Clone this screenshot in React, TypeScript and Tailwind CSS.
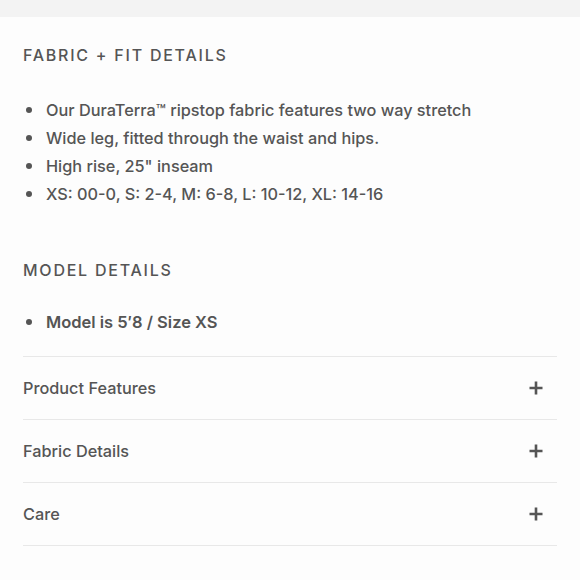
import React from 'react';

const fitDetails = [
  'Our DuraTerra™ ripstop fabric features two way stretch',
  'Wide leg, fitted through the waist and hips.',
  'High rise, 25" inseam',
  'XS: 00-0, S: 2-4, M: 6-8, L: 10-12, XL: 14-16',
];

const sections = ['Product Features', 'Fabric Details', 'Care'];

function Plus() {
  return (
    <svg width="16" height="16" viewBox="0 0 16 16" className="text-[#555]">
      <path d="M8 1.5v13M1.5 8h13" stroke="currentColor" strokeWidth="2.6" />
    </svg>
  );
}

function Bullet({ children, bold }: { children: React.ReactNode; bold?: boolean }) {
  return (
    <li className="flex items-center h-[28px]">
      <span className="w-[6px] h-[6px] rounded-full bg-[#555] ml-[3px] mr-[14px]" />
      <span className={bold ? 'font-semibold' : 'font-medium'}>{children}</span>
    </li>
  );
}

export default function App() {
  return (
    <div
      className="w-[580px] h-[580px] bg-[#fdfdfd] text-[#555] overflow-hidden"
      style={{ fontFamily: 'Inter, "Liberation Sans", sans-serif' }}
    >
      <div className="h-[17px] bg-[#f3f3f3]" />
      <div className="px-[23px]">
        <h2 className="mt-[28px] text-[16px] leading-[20px] tracking-[0.11em] font-medium text-[#555]">
          FABRIC + FIT DETAILS
        </h2>
        <ul className="mt-[31px] text-[16.3px]">
          {fitDetails.map((d) => (
            <Bullet key={d}>{d}</Bullet>
          ))}
        </ul>
        <h2 className="mt-[52px] text-[16px] leading-[20px] tracking-[0.11em] font-medium text-[#555]">
          MODEL DETAILS
        </h2>
        <ul className="mt-[28px] text-[16.5px]">
          <Bullet bold>Model is 5′8 / Size XS</Bullet>
        </ul>
        <div className="mt-[20px] w-[534px] border-t border-[#e8e8e8]">
          {sections.map((s) => (
            <div
              key={s}
              className="flex items-center justify-between h-[63px] border-b border-[#e8e8e8] pr-[13px] text-[16.3px] font-medium"
            >
              <span>{s}</span>
              <Plus />
            </div>
          ))}
        </div>
      </div>
    </div>
  );
}
